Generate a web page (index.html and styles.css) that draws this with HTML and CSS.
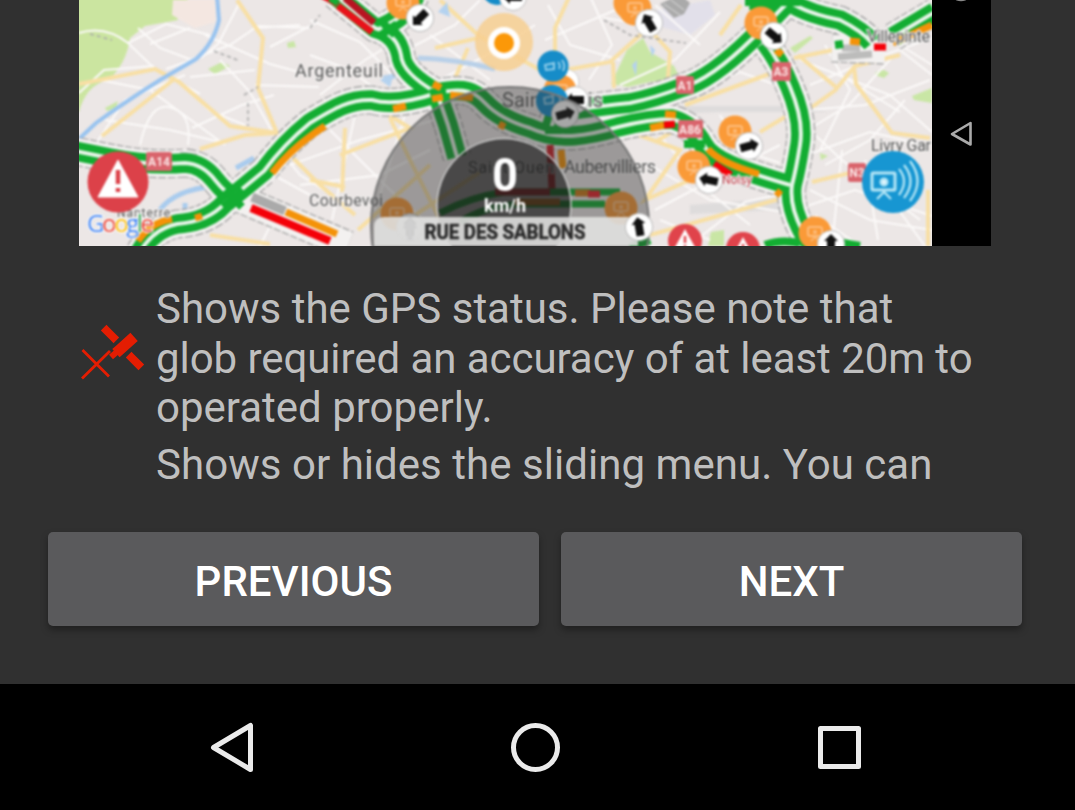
FILE: index.html
```html
<!DOCTYPE html>
<html lang="en">
<head>
<meta charset="utf-8">
<title>Help</title>
<link rel="stylesheet" href="styles.css">
</head>
<body>
<main class="screen">
  <section class="content">
    <svg class="map" viewBox="79 0 912 246" role="img" aria-label="Traffic map">
      <defs>
        <path id="a14" d="M70 150L110 158Q150 166 185 163Q203 164 215 180Q226 194 238 200"/>
        <path id="a86" d="M140 252Q153 229 177 224Q208 222 225 203L264 171Q284 144 310 123C335 108 350 99 372 100Q395 107 437 93C465 87 475 92 485 103Q500 119 530 128C560 142 590 135 618 127Q650 119 672 119Q693 125 703 144C711 160 738 170 790 185"/>
        <path id="a15" d="M335 -5L375 28Q397 34 401 55Q402 73 437 93L448 125L457 157M380 28Q407 17 415 -4"/>
        <path id="a1" d="M550 132L556 112Q600 106 630 103Q655 98 683 87Q710 80 753 38L790 0"/>
        <path id="a3" d="M765 42Q780 62 790 87Q804 120 800 145Q796 170 792 185Q789 206 803 232L815 250"/>
        <path id="a104" d="M750 0L793 4Q810 14 840 20Q862 31 872 43M893 37L935 12"/>
        <g id="cam"><circle r="16.500" fill="#fa9a38"/><rect x="-7" y="-6" width="14" height="9" rx="2" fill="none" stroke="#fdbd7c" stroke-width="2"/><circle cy="-1" r="2" fill="#fdbd7c"/><path d="M-4 8L0 4L4 8" fill="none" stroke="#fdbd7c" stroke-width="1.500"/></g>
        <g id="dir"><circle r="13.500" fill="#fff" stroke="#bbb" stroke-width="1"/><path d="M-10 0L-3 -7V-4H9V4H-3V7Z" fill="#111"/></g>
        <g id="warn"><circle r="17" fill="#e0434b"/><path d="M0 -12L11 8H-11Z" fill="#fff"/><path d="M0 -5V2M0 4V6" stroke="#e0434b" stroke-width="2.500"/></g>
      </defs>
      <rect x="79" width="912" height="246" fill="#ece7e6"/>
      <g class="scene">
        <path d="M75 -3H190L175 10L178 20L145 26L130 38Q126 65 108 80Q86 85 79 112H75Z" fill="#cbe5a0"/>
        <path d="M173 0H215V22L195 28L172 15Z" fill="#f4e7e1"/>
        <path d="M208 69L222 62L230 66L215 74ZM287 43L294 41L296 47L288 48ZM105 108L118 101L116 108L107 111ZM627 50L643 38L650 52L674 66L680 78L650 82L628 87L611 84ZM876 72L884 70L889 73L884 78L875 75ZM912 96L932 88V103L914 100ZM820 153L828 156L821 160ZM711 232L724 230L724 246H708ZM790 48L810 36L813 38L795 53Z" fill="#c9e6a5"/>
        <path d="M657 10L710 0L715 15L690 35L655 25Z" fill="#e2e0ea"/>
        <path d="M540 106H780L830 112H720L640 115H540ZM690 205L780 198V210L690 214Z" fill="#dedcdc"/>
        <g fill="none" stroke="#fbf9f8" stroke-width="2">
          <path d="M79 33Q105 25 128 43L156 70L200 94M128 43L166 24L210 35M79 93L104 70L154 66M95 145L125 100L185 75M138 28L160 48L192 60L166 69M150 44L190 28M180 82L210 111L245 125M192 128L242 105L274 95M140 145Q150 100 172 108Q192 114 188 145M190 60L230 45L255 28L300 25M205 35L270 64L310 75M190 77L255 70M240 2L218 44L201 58M255 85L319 87M270 47L318 22M255 26L310 28M220 60L250 92L277 140M280 150L300 175L340 200M255 165L310 195M105 120L170 130L220 142M100 80L150 90L225 145M239 185L275 216L260 246"/>
          <path d="M310 55L350 70L390 100M310 20L360 42L397 80M320 95L365 60L390 45M330 130L390 190L435 230M290 165L360 140L435 120M300 185L380 175L430 150M355 115L332 220M405 115L375 210M430 35L490 80M440 80L500 48L535 25M410 48L455 25L480 0M548 5L570 45L620 60M545 40L620 8M590 -4L612 45L589 80M603 18L650 25M620 85L675 60L720 12M655 5L700 45M695 90L740 72L785 88M660 135L700 185L750 225M650 165L710 200L790 213M655 210L750 160L780 145M690 245L745 202L790 192M720 115L740 150L780 163"/>
          <path d="M800 60L890 95L932 132M810 85L870 60L932 38M825 45L850 90L820 150M808 110L865 105L930 80M808 130L850 104L894 55M807 155L870 132L925 145M810 190L870 220L932 230M807 206L855 190L932 216M815 215L860 246M842 150L832 246M865 160L878 240M900 50L932 75M860 20L932 65M840 75L900 112M825 165L870 140L905 100M815 135L842 160L920 220M895 205L925 246M660 220L710 240"/>
        </g>
        <g fill="none" stroke="#f8dfa4" stroke-width="4">
          <path d="M79 84L155 69L179 82L230 126L277 133L258 88L263 38L237 0M102 136L173 80M200 149L245 135L277 133M293 158L320 185L355 215M345 128L342 192M310 180L345 187M340 155L410 128L384 112M390 118L410 160L440 220M358 230L430 165M400 225L480 172M440 0L478 35L540 70M435 48L478 38M468 48L450 90M570 -5L555 28V65M565 70L610 62L648 28M613 62L614 88M648 28L670 52L668 78M720 35L741 5M685 105L780 70M625 130L680 150L645 200L690 180M650 235L790 196M655 142L672 132"/>
          <path d="M794 58L833 50M798 55L837 88L855 66L900 55M854 67L856 84L892 133L930 138M812 107L837 89M812 182L850 173M928 190V246M760 132L785 117M210 235L270 244"/>
        </g>
        <path d="M79 139L96 123Q125 102 160 80L196 59Q214 43 219 20L217 -4" fill="none" stroke="#98c3ef" stroke-width="4"/>
        <path d="M236 168L254 158M160 210Q174 190 215 186M185 203V210" fill="none" stroke="#a9cbed" stroke-width="5"/>
        <path d="M418 58Q455 59 495 69M383 78L396 76" fill="none" stroke="#b9d0e8" stroke-width="5"/>
        <path d="M438 12L447 2L450 17ZM380 80L394 73L390 87ZM632 65L637 60L636 76ZM650 45L655 50L652 57Z" fill="#b4d2ef"/>
        <path d="M214 51L240 61M244 95L258 87M248 103V126M310 28L320 15M604 20L630 35L686 43M90 34L112 40" fill="none" stroke="#aaa" stroke-width="1.500" stroke-dasharray="4 3"/>

        <g class="road edge"><use href="#a14"/><use href="#a86"/><use href="#a15"/><use href="#a1"/><use href="#a3"/><use href="#a104"/><path d="M238 198L348 245M832 48L885 50"/></g>
        <g class="road casing"><use href="#a14"/><use href="#a86"/><use href="#a15"/><use href="#a1"/><use href="#a3"/><use href="#a104"/><path d="M238 198L348 245M832 48L885 50"/></g>
        <path d="M180 155L197 157M838 57L872 54M842 48H860" fill="none" stroke="#aaa" stroke-width="7" opacity=".75"/>
        <g class="road green"><use href="#a14"/><use href="#a86"/><use href="#a15"/><use href="#a1"/><use href="#a3"/><use href="#a104"/></g>
        <g class="road median"><use href="#a14"/><use href="#a86"/><use href="#a15"/><use href="#a1"/><use href="#a3"/><use href="#a104"/></g>
        <path d="M225 190L242 207M223 207L243 190M383 23L395 35M381 35L397 24M430 93L446 91M545 130H562M745 2H800" stroke="#13ad32" stroke-width="8"/>

        <g fill="none" stroke-width="7">
          <path d="M252 197L285 211" stroke="#aaa" stroke-width="9"/>
          <path d="M286 212L337 234" stroke="#f49208"/>
          <path d="M251 208L330 241" stroke="#f40008" stroke-width="8"/>
          <path d="M272 173Q292 147 325 126" stroke="#f49208"/>
          <path d="M138 241Q150 223 172 219" stroke="#f49208"/>
          <path d="M195 218L202 216M393 109L406 106M433 84L441 88M432 99L443 97M450 95L473 98M499 124L505 127" stroke="#f49208"/>
          <path d="M318 -7L338 4M338 6L372 32" stroke="#e9121a"/>
          <path d="M345 -2L374 23" stroke="#b81421"/>
          <path d="M330 -2L338 3" stroke="#13ad32"/>
          <path d="M650 128L664 125M665 114L676 115M708 149Q720 163 759 174M776 191L781 195M776 50L782 55M850 41L860 42" stroke="#f49208"/>
          <path d="M664 125L675 124M714 164L731 175M874 47L886 47" stroke="#f40008"/>
          <path d="M893 43L932 25" stroke="#f49208"/>
          <path d="M835 45L843 44M765 245Q780 239 800 243M837 242L860 246M630 248L650 240M684 144H705" stroke="#13ad32" stroke-width="8"/>
          <path d="M550 145L552 190" stroke="#cc2027"/>
          <path d="M561 150L563 168" stroke="#f49208"/>
          <path d="M440 213Q470 197 505 192H620M460 222Q485 206 520 204H605" stroke="#13ad32"/>
          <path d="M495 192H550" stroke="#bb2527"/>
          <path d="M515 202H560M590 193H575" stroke="#ce7a18"/>
          <path d="M588 194H600" stroke="#e8232a"/>
        </g>
        <g fill="#d9646c"><rect x="146" y="152" width="26" height="19" rx="2"/><rect x="676" y="76" width="18" height="18" rx="2"/><rect x="678" y="120" width="25" height="18" rx="2"/><rect x="772" y="62" width="19" height="19" rx="2"/><rect x="848" y="163" width="18" height="19" rx="2"/></g>
        <g class="badge"><text x="159" y="166">A14</text><text x="685" y="90">A1</text><text x="690" y="134">A86</text><text x="781" y="76">A3</text><text x="857" y="177">N3</text></g>

        <g class="place">
          <text x="295" y="77" textLength="88">Argenteuil</text>
          <text x="309" y="206" textLength="74" class="small">Courbevoi</text>
          <text x="502" y="107" textLength="101" class="big">Saint-Denis</text>
          <text x="468" y="173" textLength="86" class="small">Saint-Ouen</text>
          <text x="564" y="173" textLength="92">Aubervilliers</text>
          <text x="871" y="151" textLength="60" class="small">Livry Gar</text>
          <text x="867" y="42" textLength="63" class="small">Villepinte</text>
          <text x="117" y="217" textLength="53" class="tiny">Nanterre</text>
          <text x="722" y="184" textLength="30" class="tiny red">Noisy</text>
        </g>
        <use href="#cam" x="403" y="3"/><use href="#dir" transform="translate(420 18) rotate(-45)"/>
        <circle cx="504" cy="42" r="29" fill="#f7cf91" opacity=".85"/><circle cx="504" cy="43" r="16" fill="#fff"/><circle cx="504" cy="43" r="10" fill="#fb9808"/>
        <circle cx="497" cy="-10" r="15" fill="#168cc8"/><use href="#dir" x="513" y="-3"/>
        <use href="#cam" x="630" y="3"/><use href="#cam" x="635" y="9"/><use href="#dir" transform="translate(649 23) rotate(60)"/>
        <path d="M660 4L680 -6L690 3L684 14L674 18Z" fill="#aaa"/><path d="M664 4L680 15M671 0L684 10" stroke="#ddd"/>
        <use href="#cam" x="761" y="23"/><use href="#dir" transform="translate(774 36) rotate(220)"/>
        <use href="#cam" x="735" y="132"/><use href="#dir" transform="translate(749 146) rotate(165)"/>
        <use href="#cam" x="694" y="167"/><use href="#dir" transform="translate(709 180) rotate(12)"/>
        <circle cx="566" cy="82" r="13" fill="#fff" stroke="#ccc"/>
        <use href="#cam" x="560" y="91"/><circle cx="553" cy="66" r="15.500" fill="#168cc8"/><path d="M545 65L554 63V69L546 70ZM558 62Q561 65 559 69M562 60Q566 65 563 71" fill="none" stroke="#8ccbe9" stroke-width="2"/>
        <use href="#dir" transform="translate(575 100)"/><circle cx="552" cy="101" r="16" fill="#168cc8"/><path d="M544 98L553 96V103L545 104ZM558 95Q562 99 559 104" fill="none" stroke="#8ccbe9" stroke-width="2"/>
        <use href="#dir" transform="translate(565 114) rotate(165)"/>
        <use href="#cam" x="397" y="214"/><use href="#cam" x="621" y="208"/><use href="#dir" transform="translate(410 227) rotate(90)"/>
        <use href="#warn" x="685" y="241"/><use href="#warn" x="743" y="249"/>
        <use href="#cam" x="815" y="233"/><use href="#dir" transform="translate(831 244) rotate(90)"/>

        <circle cx="510" cy="226" r="139" fill="#333" opacity=".43"/><circle cx="510" cy="226" r="139" fill="none" stroke="#777" stroke-width="2"/>
        <circle cx="504" cy="205" r="67" fill="#161616" opacity=".62"/><path d="M438 217A67 67 0 1 1 570 217" fill="none" stroke="#c9c9c9" stroke-width="1.500"/>
        <path d="M384 217H628Q638 217 638 227V246H374V227Q374 217 384 217Z" fill="#e3e2e1" opacity=".88"/>
        <path d="M410 240V223M405 229L410 222L415 229" fill="none" stroke="#cfcfcf" stroke-width="5"/>
        <use href="#dir" transform="translate(639 227) rotate(80)"/>
        <text class="speed" x="505" y="191" textLength="26" lengthAdjust="spacingAndGlyphs">0</text>
        <text class="unit" x="505" y="212" textLength="42">km/h</text>
        <text class="street" x="505" y="238.500" textLength="161" lengthAdjust="spacingAndGlyphs">RUE DES SABLONS</text>

        <circle cx="118" cy="182" r="30.500" fill="#dc4149"/><path d="M118 160L138 197H98Z" fill="#fff" stroke="#fff" stroke-linejoin="round"/><path d="M118 170V184M118 188V192" stroke="#dc4149" stroke-width="4.500"/>
        <text class="google" x="87" y="232" textLength="67"><tspan fill="#4285f4">G</tspan><tspan fill="#ea4335">o</tspan><tspan fill="#fbbc05">o</tspan><tspan fill="#4285f4">g</tspan><tspan fill="#34a853">l</tspan><tspan fill="#ea4335">e</tspan></text>
        <circle cx="893" cy="182" r="31" fill="#1796d2"/>
        <g fill="none" stroke="#b5e6f6" stroke-width="3"><rect x="872" y="173" width="23" height="17" rx="1"/><path d="M877 199L884 192L891 199M899 169Q909 181 899 195M904 165Q917 181 904 198M910 161Q925 181 910 201" stroke-width="2.300"/><circle cx="884" cy="182" r="3" fill="#fff"/></g>
      </g>
      <rect x="932" width="59" height="246" fill="#000"/>
      <path d="M952 134L970.500 123V144.500Z" fill="none" stroke="#aaa" stroke-width="2.600" stroke-linejoin="round"/>
      <circle cx="961" cy="-10" r="10" fill="none" stroke="#888" stroke-width="2.500"/>
    </svg>

    <div class="entry">
      <svg class="gps" viewBox="0 0 66 60" aria-label="No GPS signal"><g fill="none" stroke="#e41d02"><path d="M3.500 27L30 53.500M3 55.500L31 28" stroke-width="2.800"/><path d="M27.500 7.500L34.500 14.500M52.500 34.500L59.500 41.500" stroke-width="8" stroke-linecap="square"/><path d="M41 26.500L51 17.500" stroke-width="11" stroke-linecap="square"/><path d="M32 34L40 27" stroke-width="6"/></g></svg>
      <p>Shows the GPS status. Please note that<br><span class="tight">glob required an accuracy of at least 20m to</span><br>operated properly.</p>
    </div>
    <div class="entry next-entry"><p>Shows or hides the sliding menu. You can</p></div>
  </section>
  <div class="actions"><button class="previous">PREVIOUS</button><button class="next">NEXT</button></div>
  <nav class="system">
    <svg viewBox="0 0 1075 126" fill="none" stroke="#ebebeb" stroke-width="5" stroke-linejoin="round"><path d="M213.500 63.500L250.500 41.500V85.500Z"/><circle cx="535.500" cy="63.500" r="22"/><rect x="820.500" y="44.500" width="38" height="38"/></svg>
  </nav>
</main>
</body>
</html>
```
FILE: styles.css
```css
* { box-sizing: border-box; }
body { margin: 0; background: #303030; font-family: Roboto, sans-serif; }
.screen { display: flex; flex-direction: column; width: 1075px; height: 810px; overflow: hidden; }
.content { height: 532px; padding: 0 84px 0 79px; overflow: hidden; }
.map { display: block; width: 912px; height: 246px; }
.scene { filter: blur(.8px); }
.road { fill: none; stroke-linejoin: round; }
.edge { stroke: #a0a0a0; stroke-width: 29; stroke-dasharray: 7 2; }
.casing { stroke: #f3f1f0; stroke-width: 26.5px; }
.green { stroke: #13ad32; stroke-width: 19.5px; }
.median { stroke: #e8f5e9; stroke-width: 4; }
.place { font-family: Roboto, sans-serif; font-size: 18px; fill: #555; stroke: #f5f3f2; stroke-width: 2px; paint-order: stroke; }
.place .small { font-size: 16px; }
.place .big { font-size: 20px; }
.place .tiny { font-size: 12px; }
.place .red { fill: #c23d49; }
.badge { font: bold 12px Roboto, sans-serif; fill: #fbe5e5; text-anchor: middle; }
.speed, .unit, .street { font-family: Roboto, sans-serif; font-weight: 700; text-anchor: middle; fill: #fff; }
.speed { font-size: 47px; }
.unit { font-size: 18px; }
.street { font-size: 20px; fill: #292929; stroke: #292929; stroke-width: .5px; }
.google { font: 24px "Open Sans", sans-serif; stroke: #fff; stroke-width: 2px; paint-order: stroke; }
.entry { display: flex; padding-top: 38px; }
.gps { flex: none; width: 66px; height: 60px; margin: 39px 11px 0 0; }
.entry p { margin: 0; color: #bfbfbf; font-size: 42px; line-height: 49.700px; white-space: nowrap; }
.tight { letter-spacing: -.06px; }
.next-entry { padding: 7px 0 0 77px; }
.next-entry p { letter-spacing: .04px; }
.actions { display: flex; gap: 22px; height: 152px; padding-left: 48px; }
button { height: 94px; padding: 4px 0 0; border: 0; border-radius: 5px; background: #5a5a5c; color: #fff; font: 500 42px Roboto, sans-serif; box-shadow: 0 4px 7px rgba(0, 0, 0, .35); }
.previous { width: 491px; }
.next { width: 461px; }
.system { height: 126px; background: #000; }
.system svg { display: block; width: 1075px; height: 126px; }
```
